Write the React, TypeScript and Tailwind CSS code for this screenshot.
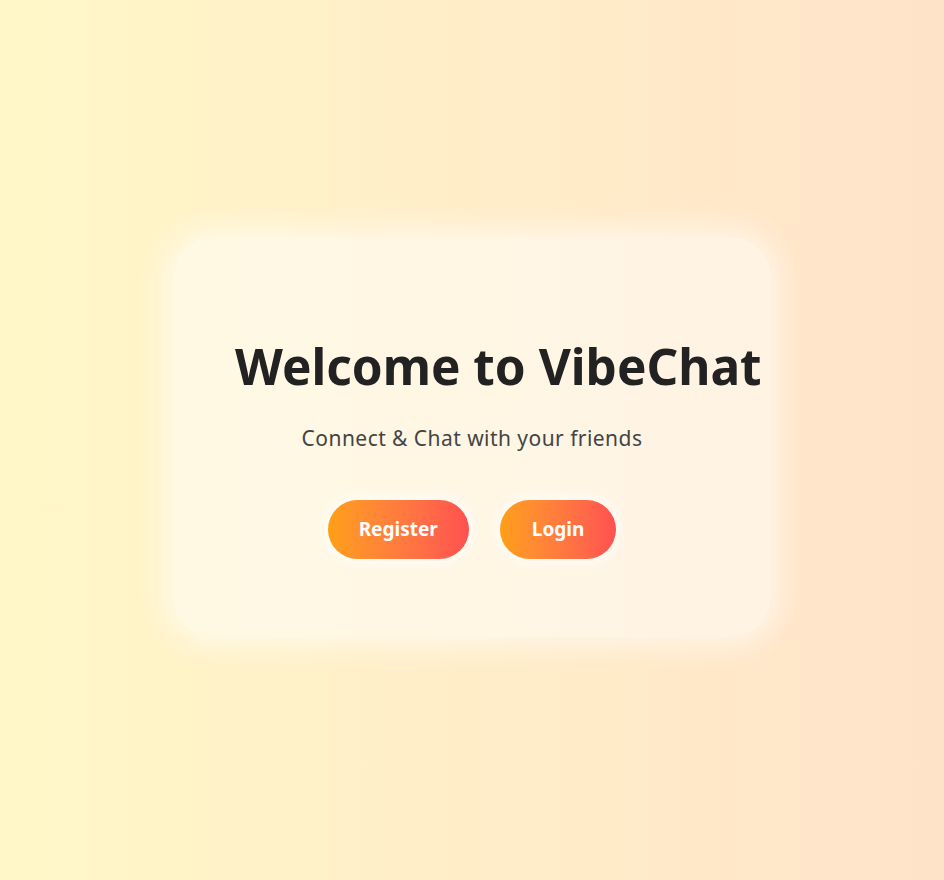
import React from "react";

export default function App() {
  return (
    <div
      className="min-h-[880px] w-full flex items-center justify-center bg-gradient-to-r from-[#fff7c8] to-[#ffe3c9]"
      style={{ fontFamily: '"Noto Sans", "Open Sans", sans-serif' }}
    >
      <div className="w-[598px] h-[400px] -mt-[6px] rounded-[40px] bg-white/50 shadow-[0_0_30px_10px_rgba(255,255,255,0.55)] px-[62px] pt-[99px] flex flex-col">
        <h1 className="text-[49.5px] leading-[60px] font-bold text-[#222] whitespace-nowrap text-center">
          Welcome to VibeChat
        </h1>
        <p className="mt-[27px] text-[21px] leading-[30px] tracking-[0.45px] text-[#444] text-center">
          Connect &amp; Chat with your friends
        </p>
        <div className="mt-[47px] flex justify-center gap-[31px]">
          <button className="h-[59px] px-[31px] rounded-full bg-gradient-to-r from-[#ff9f14] to-[#ff5050] text-white font-bold text-[19px] shadow-[0_0_12px_4px_rgba(255,255,255,0.7)]">
            Register
          </button>
          <button className="h-[59px] px-[32px] rounded-full bg-gradient-to-r from-[#ff9f14] to-[#ff5050] text-white font-bold text-[19px] shadow-[0_0_12px_4px_rgba(255,255,255,0.7)]">
            Login
          </button>
        </div>
      </div>
    </div>
  );
}
